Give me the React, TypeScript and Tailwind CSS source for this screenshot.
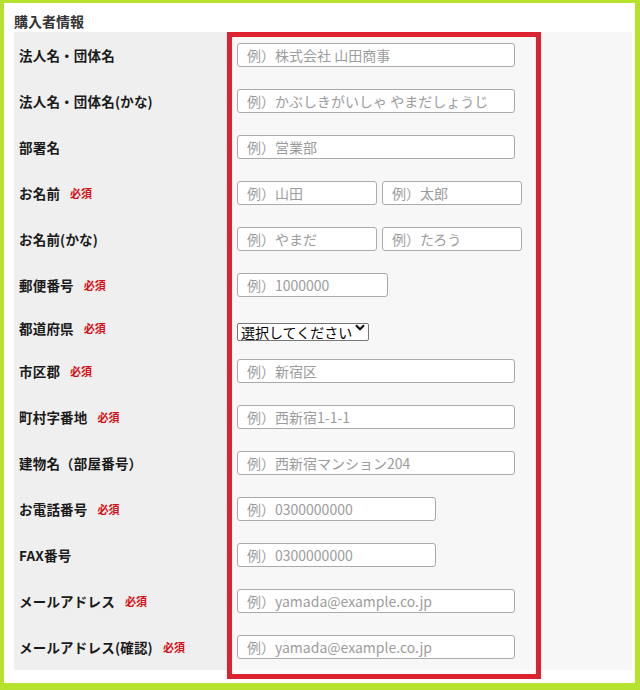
import { ChangeEvent, useState } from 'react'

interface Field {
  width: string
  placeholder: string
}

interface Row {
  label: string
  required?: boolean
  fields?: Field[]
  select?: boolean
}

const font = { fontFamily: '"Noto Sans CJK JP", "Noto Sans", sans-serif' }

const rows: Row[] = [
  { label: '法人名・団体名', fields: [{ width: 'w-[278px]', placeholder: '例）株式会社 山田商事' }] },
  { label: '法人名・団体名(かな)', fields: [{ width: 'w-[278px]', placeholder: '例）かぶしきがいしゃ やまだしょうじ' }] },
  { label: '部署名', fields: [{ width: 'w-[278px]', placeholder: '例）営業部' }] },
  {
    label: 'お名前',
    required: true,
    fields: [
      { width: 'w-[140px]', placeholder: '例）山田' },
      { width: 'w-[140px]', placeholder: '例）太郎' },
    ],
  },
  {
    label: 'お名前(かな)',
    fields: [
      { width: 'w-[140px]', placeholder: '例）やまだ' },
      { width: 'w-[140px]', placeholder: '例）たろう' },
    ],
  },
  { label: '郵便番号', required: true, fields: [{ width: 'w-[151px]', placeholder: '例）1000000' }] },
  { label: '都道府県', required: true, select: true },
  { label: '市区郡', required: true, fields: [{ width: 'w-[278px]', placeholder: '例）新宿区' }] },
  { label: '町村字番地', required: true, fields: [{ width: 'w-[278px]', placeholder: '例）西新宿1-1-1' }] },
  { label: '建物名（部屋番号）', fields: [{ width: 'w-[278px]', placeholder: '例）西新宿マンション204' }] },
  { label: 'お電話番号', required: true, fields: [{ width: 'w-[199px]', placeholder: '例）0300000000' }] },
  { label: 'FAX番号', fields: [{ width: 'w-[199px]', placeholder: '例）0300000000' }] },
  { label: 'メールアドレス', required: true, fields: [{ width: 'w-[278px]', placeholder: '例）yamada@example.co.jp' }] },
  { label: 'メールアドレス(確認)', required: true, fields: [{ width: 'w-[278px]', placeholder: '例）yamada@example.co.jp' }] },
]

function PrefSelect() {
  const [value, setValue] = useState('')
  return (
    <div className="relative w-[132px] h-[18px]">
      <select
        value={value}
        onChange={(e: ChangeEvent<HTMLSelectElement>) => setValue(e.target.value)}
        className="appearance-none w-full h-full bg-white border border-[#767676] rounded-[2px] pl-[3px] pr-[14px] text-[14px] leading-[16px] text-black overflow-hidden"
        style={font}
      >
        <option value="">選択してください</option>
        <option value="tokyo">東京都</option>
        <option value="osaka">大阪府</option>
      </select>
      {/* chevron */}
      <svg className="absolute right-[4px] top-[5px] w-[10px] h-[7px] pointer-events-none" viewBox="0 0 10 7">
        <path d="M1 1.2 L5 5.2 L9 1.2" fill="none" stroke="#111" strokeWidth="2.2" />
      </svg>
    </div>
  )
}

export default function App() {
  return (
    <div
      className="relative w-[640px] h-[690px] bg-white border-l-4 border-t-[3px] border-r-[5px] border-b-[7px] border-[#b6e22e] pl-[10px] pr-[3px]"
      style={font}
    >
      {/* Title */}
      <div className="h-[29px] flex items-end pb-[4px]">
        <h2 className="text-[14px] leading-[14px] font-bold text-[#333]">購入者情報</h2>
      </div>

      {/* Form table */}
      <div className="grid grid-cols-[213px_1fr]">
        {rows.map((row) => (
          <div key={row.label} className="contents">
            <div className="bg-[#efefef] flex items-center pl-[5px]">
              <span className="text-[13.5px] font-bold text-[#1a1a1a] tracking-[0.2px]">{row.label}</span>
              {row.required && <span className="ml-[10px] text-[11px] font-bold text-[#d40f16]">必須</span>}
            </div>
            <div className="bg-[#f7f7f7] pl-[10px] py-[11px] flex gap-[5px]">
              {row.select ? (
                <PrefSelect />
              ) : (
                row.fields?.map((f) => (
                  <input
                    key={f.placeholder}
                    type="text"
                    placeholder={f.placeholder}
                    className={`${f.width} h-[24px] bg-white border border-[#aaaaaa] rounded-[3px] px-[9px] text-[14px] text-[#333] placeholder:text-[#9c9c9c] outline-none`}
                    style={font}
                  />
                ))
              )}
            </div>
          </div>
        ))}
      </div>

      {/* Highlight frame over the input column */}
      <div className="absolute left-[223px] top-[29px] w-[314px] h-[647px] border-[5px] border-[#dc2330] pointer-events-none" />
    </div>
  )
}
